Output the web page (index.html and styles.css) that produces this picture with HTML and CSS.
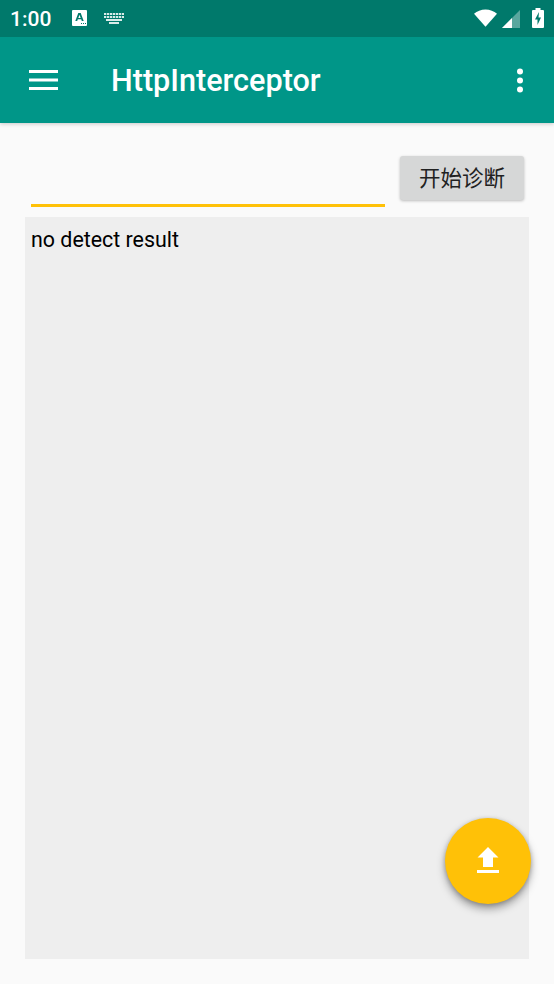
FILE: index.html
```html
<!DOCTYPE html>
<html lang="zh">
<head>
<meta charset="utf-8">
<title>HttpInterceptor</title>
<link rel="stylesheet" href="styles.css">
</head>
<body>
<div class="screen">
  <header class="header">
    <div class="status">
      <span class="time">1:00</span>
      <svg class="ic-a" width="15" height="16" viewBox="0 0 15 16"><path fill="#fff" d="M1 0h13a1 1 0 0 1 1 1v14a1 1 0 0 1-1 1H1a1 1 0 0 1-1-1V1a1 1 0 0 1 1-1z"/><path fill="#00796b" d="M6.300 3h2.400l3 8h-1.900l-.6-1.700H5.800L5.200 11H3.300zM6.300 7.900h2.400L7.500 4.700zM9 13h1v1H9zM11 13h1v1h-1zM13 13h1v1h-1z"/></svg>
      <svg class="ic-kb" width="20" height="11" viewBox="0 0 20 11"><path fill="#fff" fill-opacity=".85" d="M0 0h20v2H0zM0 3h20v2H0zM2 6h16v2H2zM5 9h10v2H5z"/><path fill="#00796b" fill-opacity=".7" d="M2 0h1v5H2zM5 0h1v5H5zM8 0h1v5H8zM11 0h1v5h-1zM14 0h1v5h-1zM17 0h1v5h-1z"/></svg>
      <span class="spacer"></span>
      <svg class="ic-wifi" width="23" height="18" viewBox="0 0 24 18"><path fill="#fff" d="M12 18 0 4.500C3.200 1.800 7.300 0 12 0s8.800 1.800 12 4.500z"/></svg>
      <svg class="ic-sig" width="18" height="18" viewBox="0 0 18 18"><path fill="#fff" fill-opacity=".35" d="M18 0v18H0z"/><path fill="#fff" d="M10 8v10H0z"/></svg>
      <svg class="ic-bat" width="12" height="20" viewBox="0 0 12 20"><path fill="#fff" d="M3.500 0h5v2H11a1 1 0 0 1 1 1v16a1 1 0 0 1-1 1H1a1 1 0 0 1-1-1V3a1 1 0 0 1 1-1h2.500z"/><path fill="#00796b" d="M7 4 3 11.500h2.500V17L9 9.500H6.500z"/></svg>
    </div>
    <div class="toolbar">
      <svg class="ic-menu" width="29" height="20" viewBox="0 0 29 20"><path fill="#fff" d="M0 0h29v3H0zM0 8.500h29v3H0zM0 17h29v3H0z"/></svg>
      <h1 class="title">HttpInterceptor</h1>
      <svg class="ic-more" width="8" height="25" viewBox="0 0 8 25"><circle cx="4" cy="3.500" r="3" fill="#fff"/><circle cx="4" cy="12.500" r="3" fill="#fff"/><circle cx="4" cy="21.500" r="3" fill="#fff"/></svg>
    </div>
  </header>
  <main class="content">
    <div class="form">
      <div class="input"></div>
      <button class="btn" type="button">开始诊断</button>
    </div>
    <div class="result">no detect result</div>
  </main>
  <button class="fab" type="button" aria-label="upload">
    <svg class="ic-up" width="22" height="26" viewBox="0 0 22 26"><path fill="#fff" d="M11 0 21.500 10.500H16V20H6V10.500H0.500zM0 23h22v3H0z"/></svg>
  </button>
</div>
</body>
</html>
```
FILE: styles.css
```css
* { box-sizing: border-box; }
html, body { margin: 0; padding: 0; }
body { background: #fafafa; font-family: Roboto, "Noto Sans CJK SC", sans-serif; }
.screen { position: relative; width: 554px; height: 984px; overflow: hidden; background: #fafafa; display: flex; flex-direction: column; }
.header { background: #009688; box-shadow: 0 1px 4px rgba(0,0,0,.2); flex: none; position: relative; z-index: 1; }
.status { height: 37px; background: #00796b; display: flex; align-items: center; padding: 0 10px 0 10px; color: #fff; }
.time { font-size: 21px; font-weight: 500; width: 62px; }
.ic-a { margin-right: 17px; margin-top: -1px; }
.ic-kb { margin-top: -1px; }
.spacer { flex: 1; }
.ic-wifi { margin-right: 5px; margin-top: -1px; }
.ic-sig { margin-right: 12px; margin-top: 1px; }
.ic-bat { margin-top: -1px; }
.toolbar { height: 86px; display: flex; align-items: center; padding: 0 30px 0 29px; color: #fff; }
.ic-menu { flex: none; }
.title { flex: 1; margin: 3px 0 0 53px; font-size: 30.600px; font-weight: 500; line-height: 1; }
.content { flex: 1; padding: 33px 25px 25px; display: flex; flex-direction: column; }
.form { display: flex; align-items: flex-start; padding: 0 5px 0 6px; height: 61px; flex: none; }
.input { width: 354px; height: 51px; border-bottom: 3px solid #ffc107; }
.btn { margin-left: 15px; width: 124px; height: 44px; border: 0; border-radius: 3px; background: #d6d7d7; box-shadow: 0 1px 3px rgba(0,0,0,.25); color: #212121; font: 400 21.500px/40px "Noto Sans CJK SC", Roboto, sans-serif; padding: 0 0 2px; }
.result { flex: 1; background: #eee; padding: 10px 6px; color: #000; font-size: 21.400px; line-height: 26px; }
.fab { position: absolute; left: 445px; top: 818px; width: 86px; height: 86px; border: 0; border-radius: 50%; background: #ffc107; box-shadow: 0 5px 9px rgba(0,0,0,.35), 0 1px 4px rgba(0,0,0,.2); display: flex; align-items: center; justify-content: center; padding: 0; }
.ic-up { margin-top: -2px; }
```
